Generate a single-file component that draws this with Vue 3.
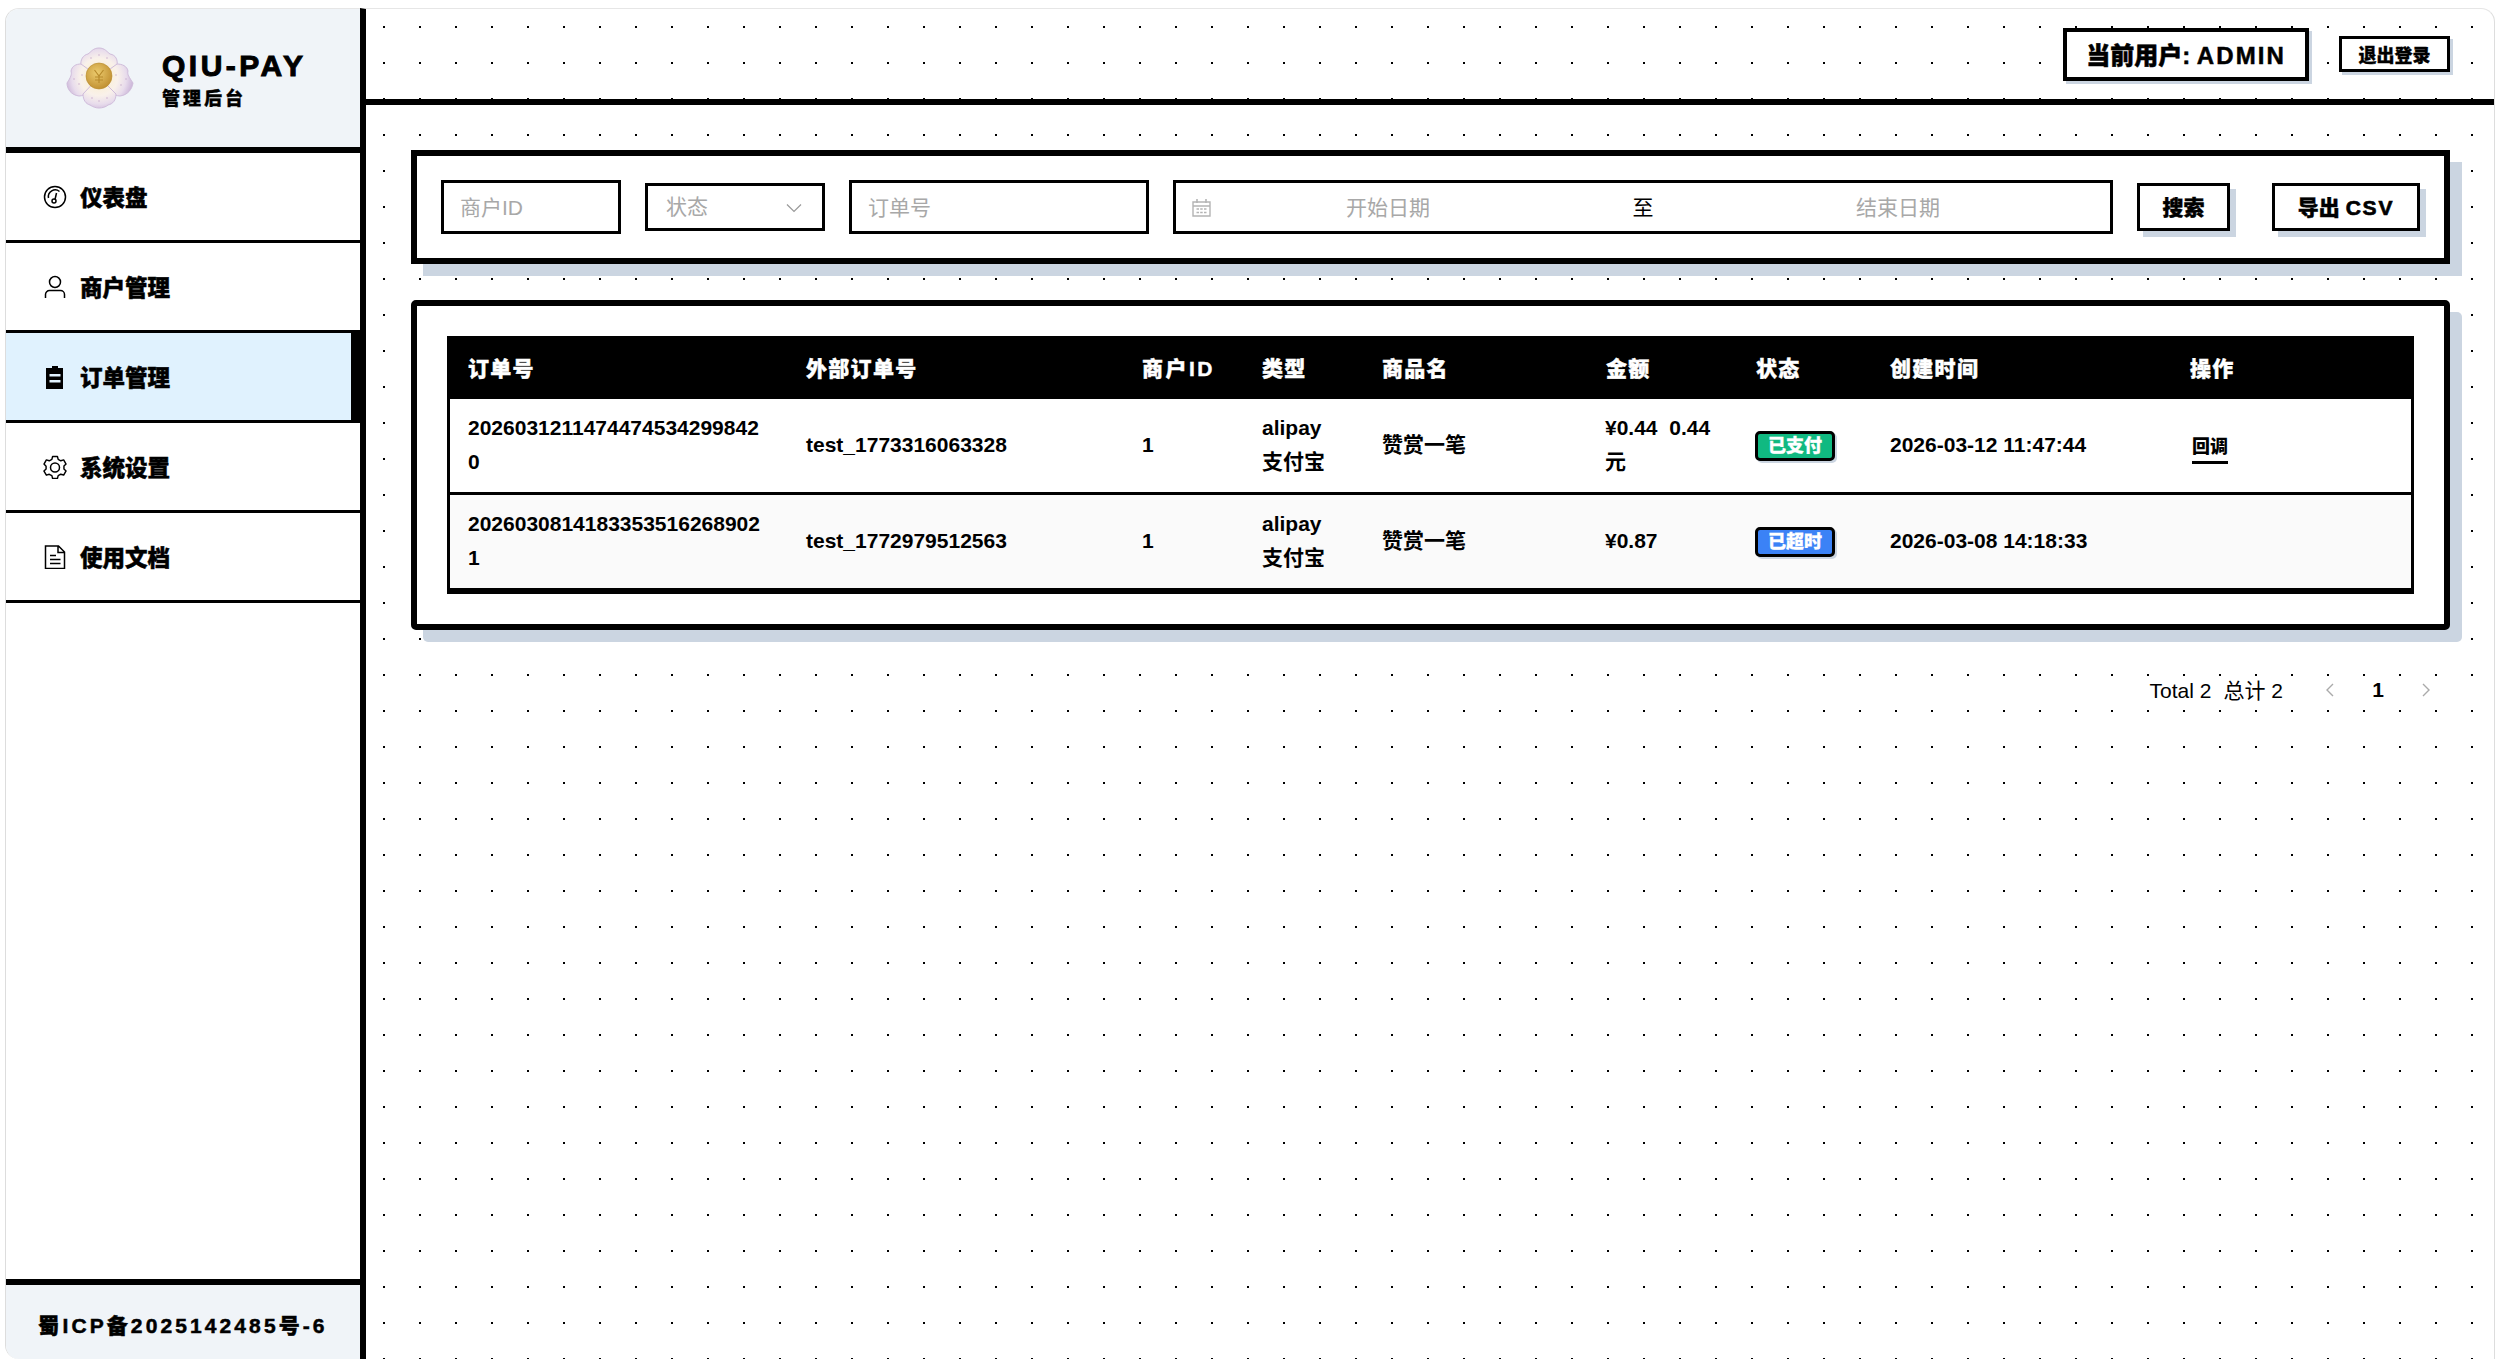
<template>
  <div class="frame">
    <aside class="side">
      <div class="brand">
        <svg class="logo" viewBox="0 0 68 62" width="68" height="62">
          <defs>
            <radialGradient id="petal" gradientUnits="userSpaceOnUse" cx="33" cy="30" r="34">
              <stop offset="0" stop-color="#fbeec6" />
              <stop offset="0.55" stop-color="#f9f1ea" />
              <stop offset="0.8" stop-color="#e8dcec" />
              <stop offset="1" stop-color="#cdb8da" />
            </radialGradient>
            <radialGradient id="coin" cx="42%" cy="38%" r="65%">
              <stop offset="0" stop-color="#eccb6e" />
              <stop offset="1" stop-color="#c08f30" />
            </radialGradient>
          </defs>
          <g fill="url(#petal)" stroke="#cfbcda" stroke-width="1">
            <path d="M33 1c6 0 8 4 11 6 6 1 8 6 7 12L33 30 15 19c-1-6 2-11 7-12 3-2 5-6 11-6z" />
            <path d="M15 17c-5 0-9 2-10 7 1 3 0 6-4 12 0 6 4 12 12 13 6 0 14-6 20-19z" />
            <path d="M51 17c5 0 10 2 11 7-1 3 1 6 5 12-1 6-5 12-13 13-6 0-15-6-21-19z" />
            <path d="M33 30 17 47c0 6 3 10 7 11 3 2 6 3 9 3s7-1 9-3c5-1 8-5 8-11z" />
          </g>
          <g fill="#c6a6c9">
            <circle cx="33" cy="8" r=".7" /><circle cx="25" cy="11" r=".7" /><circle cx="41" cy="11" r=".7" />
            <circle cx="8" cy="32" r=".7" /><circle cx="13" cy="37" r=".7" /><circle cx="60" cy="32" r=".7" />
            <circle cx="55" cy="38" r=".7" /><circle cx="26" cy="51" r=".7" /><circle cx="33" cy="54" r=".7" />
            <circle cx="41" cy="51" r=".7" /><circle cx="16" cy="28" r=".7" /><circle cx="50" cy="28" r=".7" />
          </g>
          <circle cx="33" cy="29" r="13" fill="url(#coin)" stroke="#b78a2c" stroke-width=".6" />
          <path d="M28.500 23 33 29l4.500-6M33 29v7M29 30h8M29 33h8" fill="none" stroke="#b78a2c" stroke-width="1.200" />
        </svg>
        <div class="brand-text">
          <div class="brand-name">QIU-PAY</div>
          <div class="brand-sub">管理后台</div>
        </div>
      </div>

      <nav class="menu">
        <div v-for="item in menu" :key="item.label" class="menu-item" :class="{ active: item.active }">
          <svg class="menu-icon" viewBox="0 0 24 24" width="24" height="24" v-html="item.icon"></svg>
          <span>{{ item.label }}</span>
        </div>
      </nav>

      <div class="icp">蜀ICP备2025142485号-6</div>
    </aside>

    <main class="main">
      <header class="topbar">
        <div class="user-tag">当前用户: <span class="admin">ADMIN</span></div>
        <button class="logout">退出登录</button>
      </header>

      <div class="content">
        <section class="filter">
          <div class="field id-field"><span class="ph">商户ID</span></div>
          <div class="field select-field">
            <span class="ph status-ph">状态</span>
            <svg viewBox="0 0 16 10" width="16" height="10"><path d="M1 1.500 8 8.500l7-7" fill="none" stroke="#999" stroke-width="1.200" /></svg>
          </div>
          <div class="field order-field"><span class="ph">订单号</span></div>
          <div class="field date-field">
            <svg class="cal" viewBox="0 0 19 18" width="19" height="18">
              <path d="M1 3h17v14H1zM1 7h17" fill="none" stroke="#b4b4b4" stroke-width="1.400" />
              <path d="M5 0v4M14 0v4" stroke="#b4b4b4" stroke-width="1.600" />
              <path d="M4.500 10h2.500M8.200 10h2.500M12 10h2.500M4.500 13.500h2.500M8.200 13.500h2.500M12 13.500h2.500" stroke="#b4b4b4" stroke-width="1.500" />
            </svg>
            <span class="ph date-part">开始日期</span>
            <span class="date-sep">至</span>
            <span class="ph date-part">结束日期</span>
          </div>
          <button class="btn">搜索</button>
          <button class="btn export">导出 <span class="csv">CSV</span></button>
        </section>

        <section class="table-card">
          <table class="orders">
            <colgroup>
              <col v-for="w in widths" :key="w.key" :style="{ width: w.size + 'px' }" />
            </colgroup>
            <thead>
              <tr>
                <th v-for="w in widths" :key="w.key">{{ w.key }}</th>
              </tr>
            </thead>
            <tbody>
              <tr v-for="o in orders" :key="o.ext">
                <td>{{ o.no }}</td>
                <td>{{ o.ext }}</td>
                <td>1</td>
                <td>alipay<br />支付宝</td>
                <td>赞赏一笔</td>
                <td>{{ o.amount }}</td>
                <td><span class="badge" :class="o.cls">{{ o.status }}</span></td>
                <td>{{ o.time }}</td>
                <td><a v-if="o.action" class="act">回调</a></td>
              </tr>
            </tbody>
          </table>
        </section>

        <div class="pager">
          <span class="total">Total 2</span>
          <span class="total last">总计 2</span>
          <span class="arrow"><svg viewBox="0 0 10 16" width="10" height="16"><path d="M8 2 2 8l6 6" fill="none" stroke="#aaa" stroke-width="1.400" /></svg></span>
          <span class="page">1</span>
          <span class="arrow"><svg viewBox="0 0 10 16" width="10" height="16"><path d="m2 2 6 6-6 6" fill="none" stroke="#aaa" stroke-width="1.400" /></svg></span>
        </div>
      </div>
    </main>
  </div>
</template>

<script setup>
const gauge = '<circle cx="12" cy="12" r="10.500" fill="none" stroke="#000" stroke-width="1.500"/><path d="M5.500 13a6.800 6.800 0 0 1 11-6.500" fill="none" stroke="#000" stroke-width="1.500"/><circle cx="11" cy="16" r="2" fill="none" stroke="#000" stroke-width="1.500"/><path d="M12 14.500 13.500 8" stroke="#000" stroke-width="1.500"/>'
const person = '<circle cx="12" cy="7" r="5.500" fill="none" stroke="#000" stroke-width="1.500"/><path d="M2.500 23v-3.500a4 4 0 0 1 4-4h11a4 4 0 0 1 4 4V23" fill="none" stroke="#000" stroke-width="1.500"/>'
const clip = '<path fill-rule="evenodd" d="M9 1h6v2h5v21H3V3h6zM6.500 9v2.500h11V9zm0 6v2.500h11V15z" fill="#000"/>'
const gear = '<path d="M9.500 1.500h5l.8 3 2.700 1.500 3-.9 2.500 4.300-2.200 2.100v3l2.200 2.100-2.500 4.300-3-.9-2.700 1.500-.8 3h-5l-.8-3L6 20.100l-3 .9L.5 16.700l2.200-2.100v-3L.5 9.400 3 5.100l3 .9 2.700-1.500z" fill="none" stroke="#000" stroke-width="1.500" stroke-linejoin="round" transform="matrix(.96 0 0 .96 .5 0)"/><circle cx="12" cy="12.500" r="4.500" fill="none" stroke="#000" stroke-width="1.500"/>'
const doc = '<path d="M2.500 1h13l6 6v16.500h-19zM15 1v6.500h6.500" fill="none" stroke="#000" stroke-width="1.500"/><path d="M7 10.500h6M7 14.500h10.500M7 18.500h10.500" stroke="#000" stroke-width="1.500"/>'

const menu = [
  { label: '仪表盘', icon: gauge },
  { label: '商户管理', icon: person },
  { label: '订单管理', icon: clip, active: true },
  { label: '系统设置', icon: gear },
  { label: '使用文档', icon: doc },
]

const widths = [
  { key: '订单号', size: 338 },
  { key: '外部订单号', size: 336 },
  { key: '商户ID', size: 120 },
  { key: '类型', size: 120 },
  { key: '商品名', size: 224 },
  { key: '金额', size: 150 },
  { key: '状态', size: 134 },
  { key: '创建时间', size: 300 },
  { key: '操作', size: 239 },
]

const orders = [
  {
    no: '20260312114744745342998420',
    ext: 'test_1773316063328',
    amount: '¥0.44  0.44元',
    status: '已支付',
    cls: 'paid',
    time: '2026-03-12 11:47:44',
    action: true,
  },
  {
    no: '20260308141833535162689021',
    ext: 'test_1772979512563',
    amount: '¥0.87',
    status: '已超时',
    cls: 'expired',
    time: '2026-03-08 14:18:33',
  },
]
</script>

<style>
html, body {
  margin: 0;
  background: #fff;
}
</style>

<style scoped>
.frame {
  box-sizing: border-box;
  height: 1359px;
  margin: 0;
  padding: 8px 4px 0 5px;
  display: flex;
  font-family: "Liberation Sans", "Noto Sans CJK SC", sans-serif;
  color: #000;
}

.side {
  width: 355px;
  flex: none;
  box-sizing: border-box;
  display: flex;
  flex-direction: column;
  border-left: 1px solid #ddd;
  border-top: 1px solid #e6e6e6;
  border-radius: 14px 0 0 14px;
  overflow: hidden;
  background: #fff;
}

.brand {
  box-sizing: border-box;
  height: 144px;
  flex: none;
  display: flex;
  align-items: center;
  gap: 28px;
  padding-left: 60px;
  background: #f0f4f8;
  border-bottom: 6px solid #000;
}

.brand-name {
  font-size: 30px;
  font-weight: 900;
  letter-spacing: 3.500px;
  line-height: 36px;
  margin-top: 4px;
  -webkit-text-stroke: 1px #000;
}

.brand-sub {
  font-size: 18px;
  font-weight: 900;
  letter-spacing: 3px;
  line-height: 28px;
  margin-top: 1px;
  -webkit-text-stroke: 0.3px #000;
}

.menu-item {
  box-sizing: border-box;
  height: 90px;
  display: flex;
  align-items: center;
  gap: 13px;
  padding-left: 37px;
  font-size: 22.500px;
  font-weight: 900;
  -webkit-text-stroke: 0.5px #000;
  border-bottom: 3px solid #000;
}

.menu-item span {
  position: relative;
  top: -1px;
}

.menu-item.active {
  background: #e0f2fe;
  border-right: 9px solid #000;
}

.menu-icon {
  flex: none;
}

.icp {
  margin-top: auto;
  box-sizing: border-box;
  height: 80px;
  flex: none;
  display: flex;
  align-items: center;
  justify-content: center;
  padding-top: 3px;
  background: #f0f4f8;
  border-top: 6px solid #000;
  font-size: 21px;
  font-weight: 900;
  letter-spacing: 3.100px;
  -webkit-text-stroke: 0.5px #000;
}

.main {
  flex: 1;
  min-width: 0;
  border-left: 6px solid #000;
  border-top: 1px solid #e6e6e6;
  border-right: 1px solid #ddd;
  border-radius: 0 14px 0 0;
  background-color: #fff;
  background-image: radial-gradient(circle at 1px 1px, #000 1px, transparent 1.200px);
  background-size: 36px 36px;
  background-position: 17px 17px;
  background-origin: padding-box;
}

.topbar {
  box-sizing: border-box;
  height: 96px;
  display: flex;
  align-items: center;
  justify-content: flex-end;
  gap: 30px;
  padding-right: 44px;
  border-bottom: 6px solid #000;
}

.user-tag {
  box-sizing: border-box;
  height: 53px;
  padding: 0 19px;
  line-height: 48px;
  background: #fff;
  border: 4px solid #000;
  box-shadow: 3px 3px 0 #cbd5e1;
  font-size: 24px;
  font-weight: 900;
  -webkit-text-stroke: 0.5px #000;
  white-space: nowrap;
}

.admin {
  letter-spacing: 2.100px;
}

.logout {
  box-sizing: border-box;
  width: 111px;
  height: 36px;
  padding: 0;
  background: #fff;
  border: 3px solid #000;
  box-shadow: 3px 3px 0 #cbd5e1;
  font: 900 18px "Liberation Sans", "Noto Sans CJK SC", sans-serif;
  -webkit-text-stroke: 0.3px #000;
  color: #000;
}

.content {
  padding: 45px 44px 0 45px;
}

.filter {
  box-sizing: border-box;
  height: 114px;
  display: flex;
  align-items: center;
  gap: 24px;
  padding: 0 24px;
  background: #fff;
  border: 6px solid #000;
  box-shadow: 12px 12px 0 #cbd5e1;
}

.field {
  box-sizing: border-box;
  height: 54px;
  display: flex;
  align-items: center;
  flex: none;
  padding: 0 16px 2px;
  background: #fff;
  border: 3px solid #000;
}

.id-field {
  width: 180px;
}

.select-field {
  width: 180px;
  height: 48px;
  justify-content: space-between;
  padding: 0 20px 0 18px;
}

.select-field svg {
  margin-top: 2px;
}

.status-ph {
  position: relative;
  top: -2px;
}

.order-field {
  width: 300px;
}

.date-field {
  width: 940px;
  padding: 0 0 2px 16px;
}

.cal {
  flex: none;
  margin: 3px 4px 0 0;
}

.ph {
  font-size: 21px;
  color: #a8a8a8;
}

.date-part {
  flex: none;
  width: 346px;
  text-align: center;
}

.date-sep {
  flex: none;
  width: 164px;
  text-align: center;
  font-size: 21px;
}

.btn {
  box-sizing: border-box;
  height: 48px;
  width: 93px;
  flex: none;
  padding: 0 0 2px;
  background: #fff;
  border: 3px solid #000;
  box-shadow: 6px 6px 0 #cbd5e1;
  font: 900 21px "Liberation Sans", "Noto Sans CJK SC", sans-serif;
  -webkit-text-stroke: 0.4px #000;
  color: #000;
}

.export {
  width: 148px;
  margin-left: 18px;
}

.csv {
  letter-spacing: 1.800px;
  -webkit-text-stroke: 0.7px #000;
}

.table-card {
  box-sizing: border-box;
  margin-top: 36px;
  padding: 30px;
  background: #fff;
  border: 6px solid #000;
  border-radius: 5px;
  box-shadow: 12px 12px 0 #cbd5e1;
}

.orders {
  width: 100%;
  table-layout: fixed;
  border-collapse: separate;
  border-spacing: 0;
  border: 3px solid #000;
  font-size: 21px;
  font-weight: 700;
}

.orders th {
  box-sizing: border-box;
  height: 60px;
  padding: 0 18px 4px;
  background: #000;
  color: #fff;
  text-align: left;
  font-size: 21px;
  font-weight: 900;
  letter-spacing: 1.300px;
  -webkit-text-stroke: 0.4px #fff;
}

.orders th:nth-child(3) {
  letter-spacing: 2.500px;
}

.orders td {
  box-sizing: border-box;
  height: 96px;
  padding: 0 18px 2px;
  line-height: 33.600px;
  border-bottom: 3px solid #000;
  word-break: break-all;
  white-space: pre-wrap;
}

.orders td:nth-child(6) {
  padding-left: 17px;
}

.orders tbody tr:nth-child(2) td {
  background: #fafafa;
}

.badge {
  box-sizing: border-box;
  display: inline-block;
  width: 80px;
  height: 30px;
  margin-left: -1px;
  line-height: 24px;
  text-align: center;
  border: 3px solid #000;
  border-radius: 5px;
  box-shadow: 2px 2px 0 #cbd5e1;
  color: #fff;
  font-size: 18px;
  font-weight: 900;
  -webkit-text-stroke: 0.3px #fff;
  vertical-align: middle;
}

.paid {
  background: #10b981;
}

.expired {
  background: #3b82f6;
}

.act {
  display: inline-block;
  margin: 7px 0 0 2px;
  line-height: 28px;
  font-size: 18px;
  font-weight: 900;
  border-bottom: 3px solid #000;
  vertical-align: middle;
}

.pager {
  height: 48px;
  margin-top: 36px;
  display: flex;
  align-items: center;
  justify-content: flex-end;
  font-size: 21px;
  line-height: 30px;
}

.total {
  margin-right: 12px;
  padding-top: 2px;
}

.total.last {
  margin-right: 23px;
}

.arrow,
.page {
  width: 48px;
  display: flex;
  align-items: center;
  justify-content: center;
}

.page {
  font-weight: 700;
}
</style>
